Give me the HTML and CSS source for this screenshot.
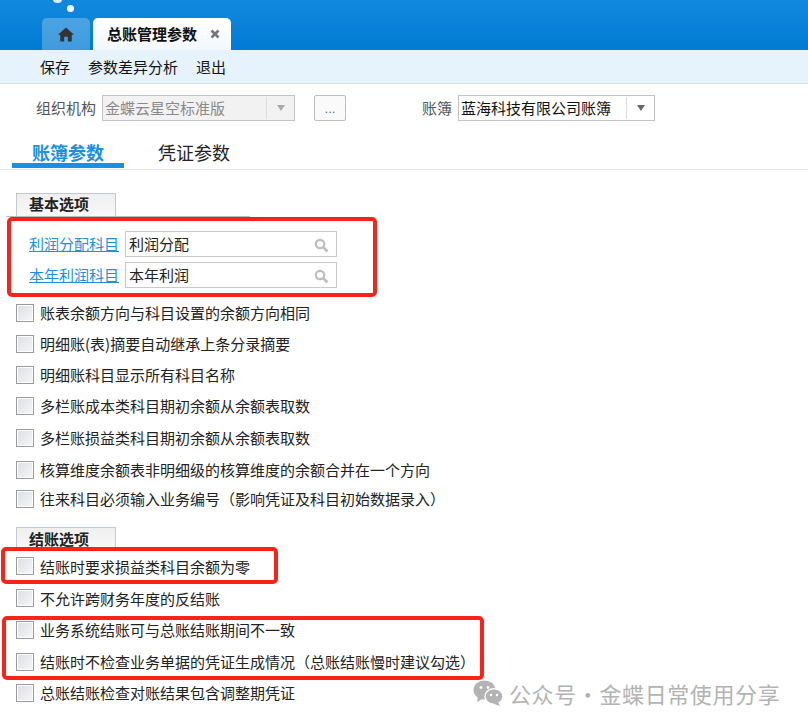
FILE: index.html
```html
<!DOCTYPE html>
<html lang="zh">
<head>
<meta charset="utf-8">
<title>总账管理参数</title>
<link rel="stylesheet" href="styles.css">
</head>
<body>
<div class="page">
  <header class="topbar">
    <span class="dot dot-a"></span>
    <span class="dot dot-b"></span>
    <div class="tab tab-home">
      <svg width="16" height="15" viewBox="0 0 15 14"><path fill="#333" d="M7.5 0.5 L15 7.2 L12.9 7.2 L12.9 13.5 L9.2 13.5 L9.2 9 L5.8 9 L5.8 13.5 L2.1 13.5 L2.1 7.2 L0 7.2 Z"/></svg>
    </div>
    <div class="tab tab-active">
      <span class="tab-title">总账管理参数</span>
      <svg class="tab-close" width="10" height="10" viewBox="0 0 10 10"><path d="M1.5 1.5 L8.5 8.5 M8.5 1.5 L1.5 8.5" stroke="#777" stroke-width="2.6" fill="none"/></svg>
    </div>
  </header>
  <nav class="toolbar"><span>保存</span><span>参数差异分析</span><span>退出</span></nav>
  <div class="filters">
    <label class="f-label f-org">组织机构</label>
    <div class="combo combo-off">
      <span class="combo-text">金蝶云星空标准版</span>
      <span class="combo-btn"><i class="caret caret-off"></i></span>
    </div>
    <button class="more">...</button>
    <label class="f-label f-book">账簿</label>
    <div class="combo combo-on">
      <span class="combo-text">蓝海科技有限公司账簿</span>
      <span class="combo-btn"><i class="caret"></i></span>
    </div>
  </div>
  <div class="tabs2">
    <div class="t2 t2-on">账簿参数</div>
    <div class="t2 t2-off">凭证参数</div>
  </div>
  <main class="content">
    <div class="sec-head"><span>基本选项</span></div>
    <div class="sec-rule"></div>
    <div class="lookups">
      <div class="lookup"><a class="lk">利润分配科目</a><div class="lk-input"><span>利润分配</span><svg width="15" height="15" viewBox="0 0 15 15"><circle cx="6" cy="6" r="4.2" fill="none" stroke="#bdbdbd" stroke-width="2.2"/><path d="M9.2 9.2 L13.5 13.5" stroke="#bdbdbd" stroke-width="2.6"/></svg></div></div>
      <div class="lookup"><a class="lk">本年利润科目</a><div class="lk-input"><span>本年利润</span><svg width="15" height="15" viewBox="0 0 15 15"><circle cx="6" cy="6" r="4.2" fill="none" stroke="#bdbdbd" stroke-width="2.2"/><path d="M9.2 9.2 L13.5 13.5" stroke="#bdbdbd" stroke-width="2.6"/></svg></div></div>
    </div>
    <div class="checks checks-a">
      <div class="ck"><i></i>账表余额方向与科目设置的余额方向相同</div>
      <div class="ck"><i></i>明细账(表)摘要自动继承上条分录摘要</div>
      <div class="ck"><i></i>明细账科目显示所有科目名称</div>
      <div class="ck"><i></i>多栏账成本类科目期初余额从余额表取数</div>
      <div class="ck ck-33"><i></i>多栏账损益类科目期初余额从余额表取数</div>
      <div class="ck"><i></i>核算维度余额表非明细级的核算维度的余额合并在一个方向</div>
      <div class="ck ck-27"><i></i>往来科目必须输入业务编号（影响凭证及科目初始数据录入）</div>
    </div>
    <div class="sec-head sec-head-2"><span>结账选项</span></div>
    <div class="checks checks-b">
      <div class="ck ck-32"><i></i>结账时要求损益类科目余额为零</div>
      <div class="ck ck-32"><i></i>不允许跨财务年度的反结账</div>
      <div class="ck"><i></i>业务系统结账可与总账结账期间不一致</div>
      <div class="ck ck-33"><i></i>结账时不检查业务单据的凭证生成情况（总账结账慢时建议勾选）</div>
      <div class="ck ck-29"><i></i>总账结账检查对账结果包含调整期凭证</div>
    </div>
  </main>
  <div class="mark mark-1"></div>
  <div class="mark mark-2"></div>
  <div class="mark mark-3"></div>
  <div class="wm">
    <svg width="30" height="26" viewBox="0 0 30 26"><ellipse cx="11.5" cy="10" rx="11" ry="9.5" fill="#b3b3b3"/><path d="M5 16 L4 22 L11 18 Z" fill="#b3b3b3"/><ellipse cx="21" cy="16.5" rx="9" ry="7.8" fill="#b3b3b3" stroke="#fff" stroke-width="1.4"/><path d="M25 22 L27 26 L20 23.5 Z" fill="#b3b3b3"/><circle cx="8" cy="7.5" r="1.4" fill="#fff"/><circle cx="15" cy="7.5" r="1.4" fill="#fff"/><circle cx="18" cy="15" r="1.2" fill="#fff"/><circle cx="24" cy="15" r="1.2" fill="#fff"/></svg>
    <span>公众号 · 金蝶日常使用分享</span>
  </div>
</div>
</body>
</html>
```
FILE: styles.css
```css
* { box-sizing: border-box; }
html, body { margin: 0; padding: 0; background: #fff; }
body { font-family: "Noto Sans CJK SC", "Liberation Sans", sans-serif; font-size: 15px; color: #222; }
.page { position: relative; width: 808px; height: 725px; overflow: hidden; }

.topbar { position: relative; height: 50px; padding: 18px 0 0 42px; display: flex; gap: 3px; background: linear-gradient(#1189de, #007bd2); }
.dot { position: absolute; background: #fff; border-radius: 50%; }
.dot-a { left: 53px; top: -4px; width: 9px; height: 7px; opacity: .85; }
.dot-b { left: 67px; top: 5px; width: 7px; height: 7px; }
.tab { height: 32px; border-radius: 5px 5px 0 0; display: flex; align-items: center; }
.tab-home { width: 48px; justify-content: center; background: linear-gradient(#4ba3e2, #3f9bdd); }
.tab-active { width: 138px; padding-left: 14px; background: linear-gradient(#fff, #f2f8fd); }
.tab-title { width: 90px; color: #111; font-weight: 700; line-height: 32px; }
.tab-close { margin-left: 13px; }

.toolbar { height: 34px; padding-left: 40px; display: flex; gap: 18px; align-items: center; background: #e6f3fc; border-bottom: 1px solid #d4e3f3; color: #111; }

.filters { height: 26px; margin-top: 11px; display: flex; align-items: center; }
.f-label { color: #555; padding-bottom: 2px; }
.f-org { margin-left: 36px; width: 66px; }
.f-book { margin-left: 76px; width: 36px; }
.combo { height: 26px; display: flex; border: 1px solid #c3c3c3; align-items: center; }
.combo-off { width: 193px; background: #f2f2f2; color: #8a8a8a; }
.combo-on { width: 197px; background: #fff; color: #111; }
.combo-text { flex: 1; padding: 0 0 2px 2px; white-space: nowrap; overflow: hidden; }
.combo-btn { width: 28px; height: 22px; border-left: 1px solid #ddd; display: flex; align-items: center; justify-content: center; }
.caret { width: 0; height: 0; border: 4.5px solid transparent; border-top: 6px solid #666; border-bottom: 0; }
.caret-off { border-top-color: #aaa; }
.more { width: 32px; height: 26px; margin-left: 19px; padding: 0; border: 1px solid #bdbdbd; border-radius: 2px; background: #fafafa; color: #666; font: 13px "Liberation Sans", sans-serif; }

.tabs2 { height: 49px; padding: 15px 0 0 12px; display: flex; border-bottom: 1px solid #e5e5e5; }
.t2 { font-size: 18px; line-height: 32px; height: 32px; }
.t2-on { width: 112px; padding-left: 20px; color: #1a8fe3; font-weight: 700; border-bottom: 5px solid #1a8fe3; }
.t2-off { margin-left: 34px; color: #222; }

.content { padding: 23px 0 0 16px; }
.sec-head { width: 100px; height: 23px; border: 1px solid #c2c9d1; border-bottom: 0; background: linear-gradient(#efefef, #f8f8f8); font-weight: 700; line-height: 20px; padding-left: 12px; color: #222; }
.sec-head-2 { height: 22px; margin-top: 15px; line-height: 22px; }
.sec-rule { width: 244px; height: 1px; margin-left: -10px; background: #b8b8b8; }
.lookups { margin-top: 14px; display: flex; flex-direction: column; gap: 5px; padding-left: 13px; }
.lookup { display: flex; align-items: center; gap: 6px; height: 26px; }
.lk { width: 90px; padding-bottom: 2px; color: #1a8fe3; text-decoration: underline; white-space: nowrap; }
.lk-input { width: 212px; height: 26px; border: 1px solid #c9c9c9; display: flex; align-items: center; justify-content: space-between; padding: 0 7px 2px 3px; color: #222; }
.lk-input svg { margin-top: 4px; }

.checks-a { margin-top: 9px; }
.checks-b { margin-top: 1px; }
.ck { height: 31px; display: flex; align-items: center; gap: 6px; white-space: nowrap; color: #222; }
.ck-32 { height: 32px; }
.ck-33 { height: 33px; }
.ck-29 { height: 29px; }
.ck-27 { height: 27px; }
.ck i { width: 18px; height: 18px; flex: none; border: 1px solid #9a9a9a; background: linear-gradient(135deg, #dcdfe4, #f6f6f8); box-shadow: inset 0 0 0 1px #fff; }

.mark { position: absolute; border: 4px solid #fa2318; border-radius: 5px; pointer-events: none; }
.mark-1 { left: 7px; top: 217px; width: 370px; height: 80px; }
.mark-2 { left: 1px; top: 547px; width: 277px; height: 37px; }
.mark-3 { left: 2px; top: 616px; width: 482px; height: 64px; }

.wm { position: absolute; left: 473px; top: 677px; display: flex; align-items: center; gap: 6px; color: #b3b3b3; font-size: 22px; letter-spacing: .6px; word-spacing: -5.5px; white-space: nowrap; }
```
